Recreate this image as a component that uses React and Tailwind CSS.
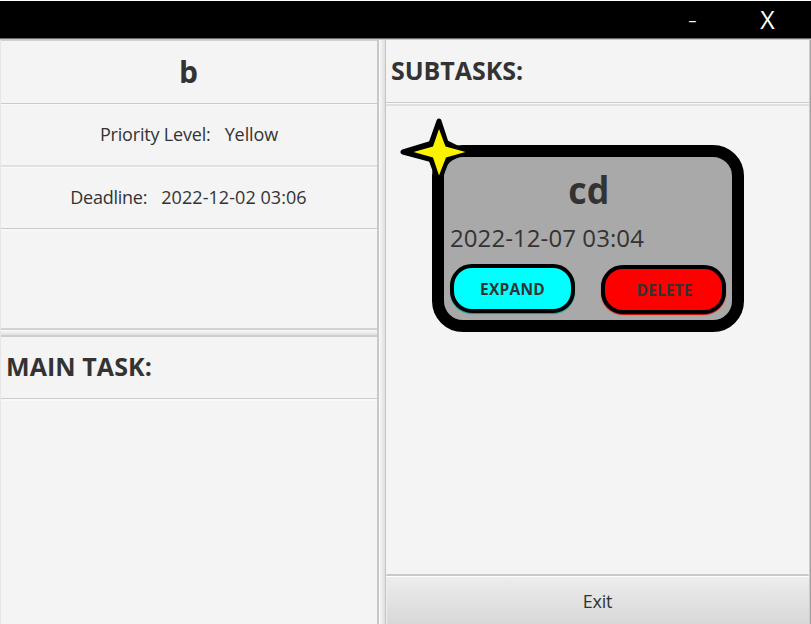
function TitleBar() {
  return (
    <header className="flex h-[40px] shrink-0 flex-col border-t border-white bg-[#f4f4f4]">
      <div className="flex h-[37px] items-center justify-end bg-black text-white">
        <button className="w-[75px] pb-[2px] text-center text-[22px] leading-[34px]">
          <span className="inline-block scale-x-125 scale-y-75">-</span>
        </button>
        <button className="w-[75px] text-center text-[25px] leading-[35px]">
          <span className="inline-block">X</span>
        </button>
        <span className="w-[6px]" />
      </div>
      <div className="h-px bg-[#6f6b6b]" />
      <div className="h-px bg-[#c8c8c8]" />
    </header>
  );
}

function LeftPane() {
  return (
    <section className="flex w-[377px] flex-col border-l border-[#e6e6e6]">
      <div className="flex h-[64px] items-center justify-center border-t border-b border-t-[#d0d0d0] border-b-[#cbcbcb] pb-[2px] pr-px text-[30px] font-bold">
        <span>b</span>
      </div>
      <div className="flex h-[63px] items-center justify-center gap-[14px] border-t border-b-2 border-t-[#fafafa] border-b-[#e0e0e0] pb-[2px] text-[18px]">
        <span className="tracking-[-0.18px]">Priority Level:</span>
        <span className="tracking-[-0.1px]">Yellow</span>
      </div>
      <div className="flex h-[62px] items-center justify-center gap-[14px] border-t border-b border-t-[#fafafa] border-b-[#cbcbcb] pb-[2px] pr-px text-[18px]">
        <span className="tracking-[-0.25px]">Deadline:</span>
        <span className="tracking-[0.06px]">2022-12-02 03:06</span>
      </div>
      <div className="h-[99px] border-t-2 border-[#f8f8f8]" />
      <div className="h-[9px] border-t-2 border-b-2 border-t-[#d2d2d2] border-b-[#cdcdcd] bg-linear-to-b from-[#fafafa] to-[#e0e0e0]" />
      <div className="flex h-[62px] items-center border-b border-[#cbcbcb] pb-[2px] pl-[5px] text-[25px] font-bold">
        <span className="tracking-[0.08px]">MAIN TASK:</span>
      </div>
      <div className="flex-1 border-t-2 border-[#f9f9f9]" />
    </section>
  );
}

function Star() {
  return (
    <svg className="absolute -left-[44px] -top-[39px]" width="68" height="60" viewBox="400 118 68 60">
      <path
        d="M439 121 L446 142.5 L465 152 L447 159.5 L442 173 L436 173 L431 159.5 L403 152 L431 143.5Z"
        fill="#000"
        stroke="#000"
        strokeWidth="5"
        strokeLinejoin="round"
      />
      <path d="M439 129 L445.5 146.5 L465.5 152 L446 157.5 L439 175.5 L433 157.5 L413.5 152 L433 146.5Z" fill="#fff200" />
    </svg>
  );
}

function TaskCard() {
  return (
    <article className="relative ml-[46px] mt-[39px] h-[187px] w-[312px] rounded-[31px] border-[12px] border-black bg-[#a9a9a9]">
      <h3 className="h-[63px] pl-px text-center text-[38px] font-bold leading-[64px]">
        <span className="inline-block scale-x-[0.94]">cd</span>
      </h3>
      <p className="h-[44px] pl-[6px] text-[24px] leading-[35px]">
        <span className="tracking-[0.08px]">2022-12-07 03:04</span>
      </p>
      <div className="flex gap-[26px] pl-[6px] text-[15.5px] font-bold">
        <button className="h-[49px] w-[125px] rounded-[22px] border-4 border-black bg-[#00ffff] pt-[2px] shadow-[0_1px_1px_#009c9c]">
          <span className="tracking-[0.25px]">EXPAND</span>
        </button>
        <button className="mt-px h-[49px] w-[125px] rounded-[22px] border-4 border-black bg-[#ff0000] pl-[2px] pt-[2px] shadow-[0_1px_1px_#d00000]">
          <span className="tracking-[0.1px]">DELETE</span>
        </button>
      </div>
      <Star />
    </article>
  );
}

function RightPane() {
  return (
    <section className="flex w-[423px] flex-col">
      <div className="flex h-[63px] items-center border-b border-[#cbcbcb] pl-[5px] text-[25px] font-bold">
        <span className="tracking-[-0.05px]">SUBTASKS:</span>
      </div>
      <div className="h-[3px] border-t border-b-2 border-t-[#f8f8f8] border-b-[#e0e0e0]" />
      <div className="h-[468px] overflow-hidden">
        <TaskCard />
      </div>
      <button className="h-[50px] rounded-t-[2px] border-t-2 border-[#c9c9c9] bg-linear-to-b from-[#ededed] to-[#d8d8d8] pt-[2px] text-[18px] shadow-[inset_0_1px_0_#fff,inset_1px_0_0_#eee]">
        <span className="tracking-[-0.2px]">Exit</span>
      </button>
    </section>
  );
}

export default function App() {
  return (
    <div className="flex h-[624px] w-[811px] flex-col overflow-hidden bg-[#f4f4f4] font-['Open_Sans','Noto_Sans',sans-serif] text-[#333333]">
      <TitleBar />
      <main className="flex flex-1">
        <LeftPane />
        <div className="w-[9px] border-l-2 border-r border-l-[#c8c8c8] border-r-[#c4c4c4] bg-linear-to-r from-[#fafafa] to-[#dedede]" />
        <RightPane />
        <div className="w-[2px] border-r border-[#a0a0a0] bg-[#cccccc]" />
      </main>
    </div>
  );
}
